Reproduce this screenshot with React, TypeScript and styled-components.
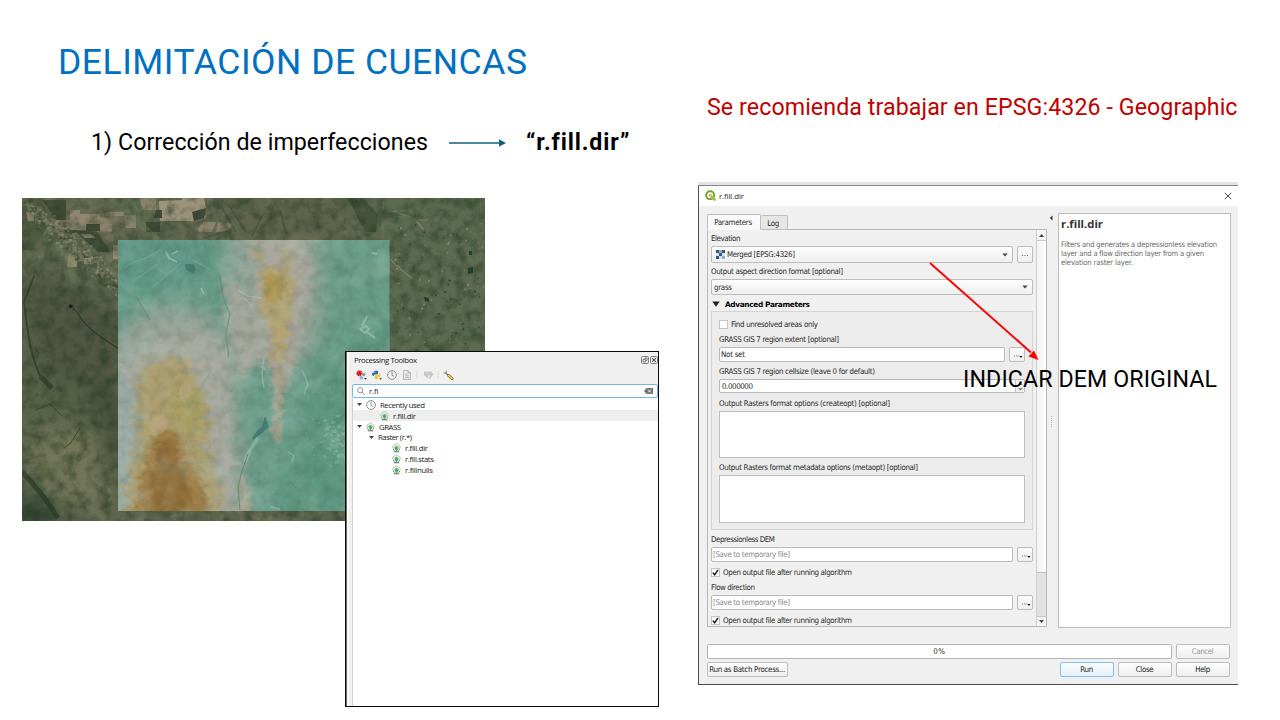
import React, { useLayoutEffect, useRef, useState } from "react";
import styled, { createGlobalStyle, css } from "styled-components";

const GlobalStyle = createGlobalStyle`
  * { box-sizing: border-box; }
  body { margin: 0; background: #fff; }
`;

const slideFont = `Roboto, "Liberation Sans", sans-serif`;
const formFont = `"DejaVu Sans Condensed", "DejaVu Sans", sans-serif`;
const treeFont = `"Open Sans", "Noto Sans", sans-serif`;

/* ---------- Text tracked to a fixed measure ---------- */

const Tracked = styled.span`
  display: inline-block;
  white-space: pre;
  flex: none;
`;

function Fit({ w, children }: { w: number; children: string }) {
  const ref = useRef<HTMLSpanElement>(null);
  const [spacing, setSpacing] = useState(0);
  useLayoutEffect(() => {
    const el = ref.current;
    if (!el) return;
    const natural = el.getBoundingClientRect().width - spacing * children.length;
    setSpacing((w - natural) / (children.length - 1));
  }, [w, children]);
  return (
    <Tracked ref={ref} style={{ letterSpacing: `${spacing}px` }}>
      {children}
    </Tracked>
  );
}

/* ---------- Slide ---------- */

const Slide = styled.main`
  width: 1280px;
  height: 720px;
  overflow: hidden;
  background: #fff;
  display: grid;
  grid-template-columns: 698px 1fr;
  font-family: ${slideFont};
  color: #000;
`;

const LeftColumn = styled.section`
  display: flex;
  flex-direction: column;
  padding: 39px 0 0 22px;
`;

const RightColumn = styled.section`
  position: relative;
  display: flex;
  flex-direction: column;
  padding-top: 92px;
`;

const Title = styled.h1`
  margin: 0;
  padding-left: 36px;
  height: 46px;
  line-height: 46px;
  font-size: 35.5px;
  font-weight: 400;
  color: #0070c0;
`;

const StepRow = styled.div`
  display: flex;
  align-items: center;
  height: 30px;
  margin: 42px 0 41px;
  padding-left: 69px;
  font-size: 23.2px;
`;

const StepArrow = styled.svg`
  flex: none;
  margin: 1px 20px 0 21px;
`;

const ToolName = styled.strong`
  font-weight: 700;
`;

const Notice = styled.p`
  margin: 0;
  padding-left: 9px;
  height: 30px;
  line-height: 30px;
  font-size: 23.2px;
  color: #c00000;
`;

const Stage = styled.div`
  position: relative;
  height: 522px;
`;

/* ---------- Map ---------- */

function rng(seed: number) {
  let s = seed;
  return () => {
    s = (s * 16807) % 2147483647;
    return s / 2147483647;
  };
}

const rand = rng(4217);
const scrubTones = ["#8f8a70", "#76805f", "#434f38", "#958e74", "#54654a"];
const scrub = Array.from({ length: 560 }, () => {
  const t = rand();
  const spread = (rand() + rand() - 1) * 34;
  return {
    x: 4 + t * 92 + spread * 0.6,
    y: 8 + t * 78 + spread,
    w: 0.8 + rand() * 2.6,
    h: 0.8 + rand() * 2,
    fill: scrubTones[Math.floor(rand() * scrubTones.length)],
  };
});
const ponds = Array.from({ length: 130 }, () => ({
  x: 370 + rand() * 92,
  y: 25 + rand() * 130,
  r: 0.35 + rand() * 0.8,
  light: rand() > 0.6,
}));
const towns = Array.from({ length: 90 }, () => ({
  x: 250 + rand() * 114,
  y: 130 + rand() * 180,
  r: 0.3 + rand() * 0.7,
}));
const cityBlocks = Array.from({ length: 110 }, () => ({
  x: 316 + (rand() + rand() - 1) * 22,
  y: 240 + (rand() + rand() - 1) * 26,
  w: 1 + rand() * 3.5,
}));

function SatelliteMap() {
  return (
    <svg width="463" height="323" viewBox="0 0 463 323" display="block">
      <defs>
        <filter id="grain" x="0" y="0" width="100%" height="100%" colorInterpolationFilters="sRGB">
          <feTurbulence type="fractalNoise" baseFrequency="0.09" numOctaves="6" seed="8" />
          <feColorMatrix values="0 0 0 0 0.14  0 0 0 0 0.22  0 0 0 0 0.13  2 0 0 0 -0.8" />
        </filter>
        <filter id="dust" x="0" y="0" width="100%" height="100%" colorInterpolationFilters="sRGB">
          <feTurbulence type="fractalNoise" baseFrequency="0.06" numOctaves="6" seed="23" />
          <feColorMatrix values="0 0 0 0 0.6  0 0 0 0 0.57  0 0 0 0 0.46  0 2.6 0 0 -1.15" />
        </filter>
        <filter id="haze" x="0" y="0" width="100%" height="100%" colorInterpolationFilters="sRGB">
          <feTurbulence type="fractalNoise" baseFrequency="0.035" numOctaves="6" seed="31" />
          <feColorMatrix values="0 0 0 0 0.72  0 0 0 0 0.82  0 0 0 0 0.78  0 2 0 0 -0.85" />
        </filter>
        <filter id="ridge" x="-30%" y="-30%" width="160%" height="160%" colorInterpolationFilters="sRGB">
          <feTurbulence type="fractalNoise" baseFrequency="0.07 0.13" numOctaves="5" seed="5" result="n" />
          <feGaussianBlur in="SourceGraphic" stdDeviation="4" result="b" />
          <feDisplacementMap in="b" in2="n" scale="22" xChannelSelector="R" yChannelSelector="G" />
        </filter>
        <filter id="ridgeFine" x="-30%" y="-30%" width="160%" height="160%" colorInterpolationFilters="sRGB">
          <feTurbulence type="fractalNoise" baseFrequency="0.11 0.17" numOctaves="4" seed="12" result="n" />
          <feGaussianBlur in="SourceGraphic" stdDeviation="1.9" result="b" />
          <feDisplacementMap in="b" in2="n" scale="13" xChannelSelector="R" yChannelSelector="G" />
        </filter>
        <filter id="soft" x="-30%" y="-30%" width="160%" height="160%" colorInterpolationFilters="sRGB">
          <feGaussianBlur stdDeviation="10" />
        </filter>
        <filter id="crisp" colorInterpolationFilters="sRGB"><feGaussianBlur stdDeviation="0.45" /></filter>
        <clipPath id="frame"><rect width="463" height="323" /></clipPath>
        <clipPath id="dem"><rect x="96" y="42" width="271.5" height="271" /></clipPath>
      </defs>
      <g clipPath="url(#frame)">
        <rect width="463" height="323" fill="#5c644c" />
        <rect width="463" height="323" filter="url(#dust)" opacity=".38" />
        <g filter="url(#soft)" opacity=".85">
          <rect x="360" y="-10" width="140" height="200" fill="#5c6c51" />
          <path d="M0 70 L50 85 L100 110 L100 250 L80 235 L60 190 L10 190 Z" fill="#4e5441" />
          <path d="M0 165 L60 190 L75 230 L30 225 L0 230 Z" fill="#556146" />
          <path d="M10 232 L75 232 L90 300 L50 310 L20 270 Z" fill="#777959" />
          <path d="M75 180 L100 190 V300 L85 270 Z" fill="#3e4834" />
          <path d="M0 285 L45 330 L-10 330 Z" fill="#263d2a" />
          <path d="M20 14 H100 V40 H60 Z" fill="#7a765e" />
          <path d="M215 0 H320 V42 H200 Z" fill="#5f644b" />
        </g>
        <g filter="url(#crisp)">
          <path d="M0 8 h38 v12 h-14 v12 l-14 20 l-10 0 Z" fill="#4d5a40" opacity=".8" />
          <path d="M20 2 h24 v30 h30 l14 22 h-12 l-22 -20 l-8 4 Z" fill="#374630" opacity=".75" />
          <g fill="#938a72">
            <path d="M33 22 h15 v-10 h10 v4 h20 v10 h12 v8 l-56 -3 Z" opacity=".85" />
            <path d="M137 3 l23 -1 v-2 h22 l2 10 l-8 4 l8 5 l-10 4 h-36 Z" fill="#9d937b" />
            <path d="M46 56 h9 v13 h-10 Z M59 36 h9 l6 4 h-12 Z M91 47 h5 v14 h-5 Z M62 60 h7 v6 h-7 Z" />
            <path d="M118 0 h16 v12 h-14 Z M176 30 l6 -6 h12 l-4 10 h-14 Z M196 24 l14 2 l-3 7 l-13 1 Z" opacity=".8" />
            <path d="M5 5 h6 v4 h-6 Z M4 14 h8 v9 h-6 Z M15 8 h5 v5 h-5 Z M84 14 h18 v4 h-18 Z M70 20 h18 v9 h-22 Z M102 17 h12 v13 h-10 Z" opacity=".8" />
          </g>
          <path d="M64 26 h14 v7 h-14 Z M124 24 h14 v10 h-14 Z M170 14 l14 -4 l-2 10 l-10 3 Z M134 12 h6 v8 h-8 Z" fill="#3e4935" />
          <path d="M90 0 L118 26 L136 42 M30 40 L46 60 L52 86 M108 0 L126 20" stroke="#67805c" strokeWidth="6" fill="none" opacity=".4" />
          {scrub.map((s, i) => (
            <rect key={i} x={s.x} y={s.y} width={s.w} height={s.h} fill={s.fill} opacity=".65" />
          ))}
          <path d="M326 0 h14 l16 16 l-2 18 h-10 l-8 -14 Z" fill="#37492f" opacity=".65" />
          <path d="M200 10 l14 24 M206 6 l18 28 M182 40 l26 -8 M258 12 l6 24 M240 18 l-10 20" stroke="#3b4a33" strokeWidth="1.8" fill="none" opacity=".5" />
          <path d="M361 0 V42" stroke="#8b8870" strokeWidth=".8" opacity=".5" />
          <path d="M12 78 L2 104 C6 136 8 156 18 178" stroke="#233425" strokeWidth="2" fill="none" opacity=".6" />
          <path d="M47 107 q5 -1 4 4 l4 3 C62 128 76 138 96 150" stroke="#1d2f26" strokeWidth="1.1" fill="none" opacity=".75" />
          <circle cx="48.500" cy="108.500" r="1.700" fill="#101f1b" />
          <path d="M18 178 L30 190 M0 274 C14 288 26 304 36 320" stroke="#1f3324" strokeWidth="5" fill="none" opacity=".6" />
          <path d="M42 250 L48 246 L58 230 M14 212 L28 206 L40 218" stroke="#343d2a" fill="none" opacity=".8" />
          {ponds.map((p, i) => (
            <circle key={i} cx={p.x} cy={p.y} r={p.r} fill={p.light ? "#a09e84" : "#1d3a2f"} opacity=".65" />
          ))}
          <path d="M446 70 l5 -1 v6 l-5 1 Z M402 99 l5 1 v4 l-4 -1 Z M447 53 l3 0 v4 l-3 0 Z" fill="#1f4038" />
          <path d="M369 62 L382 74 L392 82 M370 13 L392 20 L402 32 M368 13 h16 M390 22 h16" stroke="#928b72" strokeWidth="1.200" fill="none" opacity=".7" />
        </g>
        <rect width="463" height="323" filter="url(#grain)" opacity=".6" />

        <g clipPath="url(#dem)">
          <rect x="96" y="42" width="272" height="271" fill="#699d8a" />
          <g filter="url(#soft)">
            <path d="M80 150 L130 105 L190 115 L215 150 L222 330 L80 330 Z" fill="#98a59b" />
            <path d="M205 30 H300 V130 L290 160 L240 175 L230 110 L205 80 Z" fill="#93a498" />
            <path d="M290 160 L380 120 V340 H250 Z" fill="#5e9782" />
            <path d="M96 42 H195 V80 L96 110 Z" fill="#609886" />
          </g>
          <g filter="url(#ridge)">
            <path d="M224 30 H278 L290 70 L286 110 L278 150 L266 176 L250 168 L240 150 L236 110 L236 66 Z" fill="#aaa79b" />
            <path d="M202 78 L222 90 L240 100 L248 150 L236 168 L212 182 L206 140 Z" fill="#a3a69b" />
            <path d="M96 168 L130 140 L170 132 L204 150 L204 200 L212 260 L212 325 L90 325 Z" fill="#a6a89e" />
            <path d="M84 180 L112 180 L114 230 L104 325 L84 325 Z" fill="#9aaba6" />
            <path d="M120 170 L140 158 L162 160 L182 196 L190 232 L184 250 L196 285 L204 330 L104 330 L104 290 L116 240 L114 190 Z" fill="#ae9f70" />
          </g>
          <g filter="url(#ridgeFine)">
            <path d="M248 156 H270 L268 176 L262 200 L259 214 L258 244 L252 246 L252 215 L250 190 Z" fill="#aba391" />
            <path d="M218 274 L226 288 L230 318 L215 318 L217 290 Z" fill="#a9a493" />
            <path d="M240 70 L264 70 L274 84 L268 108 L268 124 L262 158 L250 162 L248 130 L238 112 L240 92 Z" fill="#b3a372" />
            <path d="M226 52 L238 50 L244 64 L238 68 Z M262 46 L270 50 L270 70 L260 64 Z" fill="#afa37e" />
            <path d="M244 78 L258 80 L264 94 L254 110 L240 98 Z" fill="#ae9650" opacity=".85" />
            <path d="M136 232 L150 230 L162 244 L164 262 L178 280 L190 325 L112 325 L112 300 L124 262 Z" fill="#a0804b" />
            <path d="M138 242 L154 242 L160 270 L170 300 L154 318 L128 318 L130 280 Z" fill="#906a35" opacity=".8" />
            <path d="M148 186 L178 190 L184 216 L168 240 L152 220 Z" fill="#a89e60" opacity=".7" />
          </g>
          <rect x="96" y="42" width="272" height="271" filter="url(#haze)" opacity=".3" />
          <rect x="96" y="42" width="272" height="271" filter="url(#grain)" opacity=".17" />
          <g filter="url(#crisp)" opacity=".75">
            <path d="M127 230 q3 -14 14 -14 q6 4 4 14 l-6 6 l-8 2 Z M158 188 q6 -6 12 0 l-2 10 l-8 4 l-4 -6 Z M160 160 q6 -4 10 0 l2 10 l-6 0 Z M178 164 q6 -2 6 3 q-6 6 -8 2 Z" fill="#bda988" opacity=".7" />
            <path d="M163 66 l8 0 l3 5 l-3 4 l-7 -3 Z" fill="#3d7469" />
            <path d="M243 218 l4 11 l-12 10 l-4 3 l-1 -2 l5 -7 l5 -4 Z" fill="#38706a" />
            <path d="M236 240 L228 252 L223 264" stroke="#9cc4b7" strokeWidth="3.500" fill="none" opacity=".7" />
            <path d="M226 256 L219 276 L216 290 L218 312" stroke="#5d7769" strokeWidth=".9" fill="none" />
            <path d="M115 100 L122 112 L128 122 M198 78 C200 92 200 100 208 116 L204 134 C203 146 208 150 206 160" stroke="#568674" strokeWidth="1.200" fill="none" opacity=".8" />
            <path d="M156 262 L172 266 L190 262 M178 190 L190 172" stroke="#8b9792" strokeWidth="1.200" fill="none" opacity=".7" />
            <path d="M144 54 l3 6 l8 4 M150 56 l6 -3 M179 90 l3 6 M338 131 l6 -3 l3 3 l-4 4 Z M344 133 l9 7 M340 128 l5 -10 M350 55 l5 1" stroke="#b3d4c8" strokeWidth="1.800" fill="none" opacity=".65" />
            <path d="M102 70 C115 60 125 62 138 52 M110 84 L136 66 M130 90 L160 64 M170 62 L190 72" stroke="#7fb5a2" strokeWidth="1.100" fill="none" opacity=".6" />
            <path d="M216 92 l10 6 l14 2 M222 100 l8 8 M242 160 l-2 16 l2 14 M238 168 l6 4 M280 172 l6 14 l-4 10 M266 254 l6 4 l-2 6 M248 309 l10 2" stroke="#b4cfc8" strokeWidth="1.500" fill="none" opacity=".55" />
            {cityBlocks.map((c, i) => (
              <rect key={i} x={c.x} y={c.y} width={c.w} height={c.w * 0.7} fill="#9cc7ba" opacity=".4" />
            ))}
            {towns.map((t, i) => (
              <circle key={i} cx={t.x} cy={t.y} r={t.r} fill="#a9cbbd" opacity=".4" />
            ))}
          </g>
        </g>
      </g>
    </svg>
  );
}

/* ---------- Processing toolbox ---------- */

const Toolbox = styled.aside`
  position: absolute;
  left: 323px;
  top: 153px;
  width: 314px;
  height: 356px;
  border: 1.5px solid #0a0a0a;
  background: #f0f0f0;
  padding: 1px 0 0 6px;
  display: flex;
  flex-direction: column;
  font-family: ${treeFont};
  font-size: 7.8px;
  color: #1d1d1d;
  box-shadow: inset 1px 0 #6b6b60, inset 3px 0 #fafafa;
`;

const ToolboxHeader = styled.header`
  display: flex;
  align-items: center;
  justify-content: space-between;
  height: 13px;
  padding: 0 0 0 2px;
`;

const IconBar = styled.div`
  display: flex;
  align-items: center;
  height: 18px;
  padding-left: 4px;
`;

const SearchBox = styled.div`
  display: flex;
  align-items: center;
  height: 14px;
  padding: 0 4px 0 4px;
  border: 1.5px solid #73b9ec;
  border-radius: 2px;
  background: #fff;
  gap: 4px;
  & > :last-child { margin-left: auto; }
`;

const Tree = styled.ul`
  list-style: none;
  margin: 0;
  padding: 1px 0 0;
  flex: 1;
  background: #fff;
  border-left: 1px solid #cfcfcf;
`;

const TreeRow = styled.li<{ $indent: number; $h?: number; $selected?: boolean }>`
  display: flex;
  align-items: center;
  height: ${(p) => p.$h ?? 11}px;
  padding-left: ${(p) => p.$indent}px;
  gap: 4px;
  background: ${(p) => (p.$selected ? "#eeeeee" : "transparent")};
`;

const Glyph = styled.svg`
  flex: none;
  display: block;
`;

const BarIcon = styled(Glyph)<{ $gap?: number }>`
  margin-right: ${(p) => p.$gap ?? 5}px;
`;

const Caret = () => (
  <Glyph width="5" height="5" viewBox="0 0 5 5"><path d="M0 1h5L2.5 4Z" fill="#404040" /></Glyph>
);

const ClockIcon = ({ size = 10 }: { size?: number }) => (
  <Glyph width={size} height={size} viewBox="0 0 10 10" fill="none" stroke="#858585" strokeWidth=".9">
    <circle cx="5" cy="5" r="4.4" /><path d="M5 1.6V5.2L7 6.5" />
  </Glyph>
);

const GrassIcon = () => (
  <Glyph width="9" height="10" viewBox="0 0 9 10">
    <path d="M4.500.4 8.400 3.600 6.800 8H2.200L.6 3.600Z" fill="#eef3ee" stroke="#a3aaa4" strokeWidth=".7" />
    <circle cx="4.500" cy="4.800" r="2" fill="#5bb56c" opacity=".75" />
    <path d="M4.500 7.800V3.500M4.300 7.400 2.800 4.400M4.700 7.400 6.200 4.400" stroke="#35a24c" strokeWidth=".8" fill="none" />
    <path d="M2.200 7.200 1 6M6.800 7.200 8 6" stroke="#7b8a7e" strokeWidth=".8" />
    <path d="M1.800 8.200H7.200V9.300H1.800Z" fill="#6b776f" />
  </Glyph>
);

function ProcessingToolbox() {
  return (
    <Toolbox>
      <ToolboxHeader>
        <Fit w={63}>Processing Toolbox</Fit>
        <Glyph width="17" height="8" viewBox="0 0 17 8" fill="none" stroke="#666" strokeWidth=".8">
          <rect x=".5" y=".5" width="7" height="7" rx="1.2" /><path d="M2 6V3.5h2.500V6ZM3.800 3.300V2h2.300v2.400H4.800" />
          <rect x="9.500" y=".5" width="7" height="7" rx="1.200" /><path d="m11.200 2.200 3.600 3.600m0-3.600-3.600 3.600" strokeWidth="1.300" />
        </Glyph>
      </ToolboxHeader>
      <IconBar>
        <BarIcon $gap={5} width="11" height="10" viewBox="0 0 11 10">
          <circle cx="3.300" cy="3.300" r="2.300" fill="#d51f1f" stroke="#d51f1f" strokeWidth="1.600" strokeDasharray="1.100 .7" />
          <circle cx="7.700" cy="4.400" r="1.500" fill="#999" stroke="#999" strokeDasharray=".8 .5" />
          <circle cx="5.400" cy="7.800" r="1.500" fill="#8fb2e4" stroke="#8fb2e4" strokeDasharray=".8 .5" />
          <path d="M8 8h3L9.500 9.700Z" fill="#333" />
        </BarIcon>
        <BarIcon width="10" height="10" viewBox="0 0 10 10">
          <path d="M2.200 1.200Q4-.3 6 1v2.500Q6 4.600 4.800 4.600H3Q2 4.600 1.800 6 .2 6-.1 4.200 0 2.600 1.500 2.600H3.800V2.200H2.200Z" fill="#2f6ea5" />
          <path d="M6.200 8.800Q4.400 9.900 2.600 8.600V6.300Q2.800 5.200 3.800 5.200h2Q7 5 7 3.200q1.600.2 1.600 2-.1 1.700-1.600 1.900H5v.5h1.200Z" fill="#f2c62f" />
          <path d="M7.200 8.200h2.800L8.600 9.800Z" fill="#333" />
        </BarIcon>
        <ClockIcon />
        <BarIcon width="21" height="10" viewBox="0 0 21 10" fill="none" stroke="#a5a5a5" strokeWidth=".8">
          <path d="M6.500.6h4.700l2.200 2.200v6.600H6.500ZM11 .6v2.500h2.400M8 4h2.600M8 5.800h4M8 7.500h4" />
          <path d="M20 1v8" stroke="#d2d2d2" />
        </BarIcon>
        <BarIcon $gap={4} width="16" height="10" viewBox="0 0 16 10">
          <path d="M1 1.600h8v4H5.400v3L1 5.600Z" fill="#c9c9c9" />
          <path d="m5.600 8.200 4-5 1 .8-3.900 5Z" fill="#c4bfae" />
          <path d="M15 1v8" stroke="#d2d2d2" strokeWidth=".8" />
        </BarIcon>
        <Glyph width="11" height="10" viewBox="0 0 11 10" fill="none">
          <path d="m2.600 3 3 2.600" stroke="#777" strokeWidth="1.200" />
          <path d="M3.400.7 2.900 3 .7 3" stroke="#777" />
          <path d="m5.500 5.400 3.700 3.300" stroke="#8a7420" strokeWidth="2.800" strokeLinecap="round" />
          <path d="m5.700 5.400 3.400 3.100" stroke="#f3d568" strokeWidth="1.400" strokeLinecap="round" />
        </Glyph>
      </IconBar>
      <SearchBox>
        <Glyph width="8" height="8" viewBox="0 0 8 8" fill="none" stroke="#777" strokeWidth=".8">
          <circle cx="3.200" cy="3.200" r="2.600" /><path d="m5.100 5.100 2.500 2.500" />
        </Glyph>
        <Fit w={9.5}>r.fi</Fit>
        <Glyph width="9" height="6" viewBox="0 0 9 6">
          <path d="M2.600 0H9v6H2.600L0 3Z" fill="#707070" /><path d="m4 1.500 3 3m0-3-3 3" stroke="#fff" strokeWidth=".9" />
        </Glyph>
      </SearchBox>
      <Tree>
        <TreeRow $indent={4}><Caret /><ClockIcon /><Fit w={45}>Recently used</Fit></TreeRow>
        <TreeRow $indent={27} $selected><GrassIcon /><Fit w={23}>r.fill.dir</Fit></TreeRow>
        <TreeRow $indent={4}><Caret /><GrassIcon /><Fit w={22}>GRASS</Fit></TreeRow>
        <TreeRow $indent={16} $h={10}><Caret /><Fit w={34}>Raster (r.*)</Fit></TreeRow>
        <TreeRow $indent={39}><GrassIcon /><Fit w={23}>r.fill.dir</Fit></TreeRow>
        <TreeRow $indent={39}><GrassIcon /><Fit w={29}>r.fill.stats</Fit></TreeRow>
        <TreeRow $indent={39}><GrassIcon /><Fit w={28}>r.fillnulls</Fit></TreeRow>
      </Tree>
    </Toolbox>
  );
}

/* ---------- r.fill.dir dialog ---------- */

const Dialog = styled.section`
  width: 540px;
  height: 503px;
  margin-top: 60px;
  border-top: 3px solid #e4e4e4;
  background: #f0f0f0;
  display: flex;
  flex-direction: column;
  font-family: ${formFont};
  font-size: 7.9px;
  color: #2a2a2a;
  box-shadow: inset 0 1px #858585, inset 1px 0 #4d4d4d, inset 0 -1px #4d4d4d;
`;

const TitleBar = styled.header`
  display: flex;
  align-items: center;
  height: 20px;
  margin: 1px 0 0 1px;
  padding: 0 6px 1px 6px;
  background: #fff;
  gap: 3px;
  font-family: ${treeFont};
  & > :last-child { margin-left: auto; }
`;

const DialogBody = styled.div`
  display: grid;
  grid-template-columns: 340px 11px 173px;
  padding: 7px 0 0 9px;
  height: 421px;
`;

const TabsColumn = styled.div`
  display: flex;
  flex-direction: column;
  height: 414px;
`;

const TabStrip = styled.div`
  display: flex;
  align-items: flex-end;
  height: 17px;
  flex: none;
  margin-bottom: -1px;
`;

const Tab = styled.div<{ $active?: boolean }>`
  position: relative;
  display: flex;
  justify-content: center;
  align-items: center;
  width: ${(p) => (p.$active ? 54 : 27)}px;
  height: ${(p) => (p.$active ? 16 : 15)}px;
  padding: 1px 2px 0 0;
  border: 1px solid #bdbdbd;
  border-left-width: ${(p) => (p.$active ? 1 : 0)}px;
  border-bottom-color: ${(p) => (p.$active ? "#fafafa" : "#bdbdbd")};
  border-radius: 2px 2px 0 0;
  background: ${(p) => (p.$active ? "#fafafa" : "#e6e6e6")};
`;

const TabPanel = styled.div`
  flex: 1;
  display: flex;
  min-height: 0;
  border: 1px solid #b8b8b8;
`;

const Form = styled.div`
  flex: 1;
  padding: 0 3px;
  display: flex;
  flex-direction: column;
`;

const Label = styled.div<{ $h: number; $drop?: number }>`
  display: flex;
  align-items: center;
  flex: none;
  height: ${(p) => p.$h}px;
  padding-top: ${(p) => p.$drop ?? 0}px;
`;

const FieldRow = styled.div<{ $h: number; $gap?: number }>`
  display: flex;
  flex: none;
  height: ${(p) => p.$h}px;
  gap: ${(p) => p.$gap ?? 4}px;
`;

const raised = css`
  border: 1px solid #bcbcbc;
  border-radius: 2px;
  background: linear-gradient(#fdfdfd, #efefef);
`;

const Combo = styled.div<{ $pad?: number }>`
  ${raised}
  flex: 1;
  display: flex;
  align-items: center;
  gap: 2px;
  padding: 0 4px 0 ${(p) => p.$pad ?? 2}px;
  & > :last-child { margin-left: auto; }
`;

const Input = styled.div<{ $muted?: boolean }>`
  flex: 1;
  display: flex;
  align-items: center;
  padding-left: 1px;
  border: 1px solid #b9b9b9;
  border-radius: 2px;
  background: #fff;
  color: ${(p) => (p.$muted ? "#8c8c8c" : "#222")};
`;

const SpinBox = styled(Input)`
  justify-content: space-between;
  padding-left: 2px;
`;

const SpinButtons = styled.div`
  display: flex;
  align-items: center;
  justify-content: center;
  width: 9px;
  height: 100%;
  border-left: 1px solid #c8c8c8;
  background: #f0f0f0;
`;

const MoreButton = styled.button`
  ${raised}
  flex: none;
  display: flex;
  align-items: center;
  justify-content: center;
  width: 16px;
  padding: 0;
`;

const TextArea = styled.div<{ $h: number }>`
  flex: none;
  height: ${(p) => p.$h}px;
  border: 1px solid #bdbdbd;
  background: #fff;
`;

const SectionHead = styled.div`
  display: flex;
  align-items: center;
  flex: none;
  height: 16px;
  gap: 5px;
  padding: 2px 0 0 1px;
  font-family: "DejaVu Sans", sans-serif;
  font-weight: 700;
  font-size: 7.4px;
  color: #000;
`;

const Group = styled.div`
  flex: none;
  height: 219px;
  border: 1px solid #d4d4d4;
  background: #ececec;
  padding: 4px 7px 0;
`;

const CheckRow = styled.div<{ $h: number; $drop?: number }>`
  display: flex;
  align-items: center;
  flex: none;
  height: ${(p) => p.$h}px;
  padding-top: ${(p) => p.$drop ?? 0}px;
  gap: 3px;
`;

const CheckBox = styled.span`
  flex: none;
  width: 9px;
  height: 9px;
  border: 1px solid #c4c4c4;
  background: #fff;
  display: flex;
  align-items: center;
  justify-content: center;
`;

const ScrollBar = styled.div`
  display: flex;
  flex-direction: column;
  width: 10px;
  border-left: 1px solid #cfcfcf;
  background: #e2e2e2;
`;

const ScrollStep = styled.div<{ $bottom?: boolean }>`
  display: flex;
  align-items: center;
  justify-content: center;
  height: 10px;
  flex: none;
  background: #f6f6f6;
  ${(p) => p.$bottom && css`margin-top: auto; border-top: 1px solid #c9c9c9;`}
`;

const ScrollThumb = styled.div`
  height: 333px;
  border-top: 1px solid #c9c9c9;
  border-bottom: 1px solid #c0c0c0;
  background: linear-gradient(90deg, #f3f3f3, #fdfdfd);
`;

const Splitter = styled.div`
  display: flex;
  flex-direction: column;
  align-items: center;
  justify-content: space-between;
  height: 414px;
  padding: 2px 3px 199px 0;
`;

const HelpPane = styled.article`
  border: 1px solid #bdbdbd;
  background: #fff;
  padding: 3px 0 0 2px;
  height: 415px;
`;

const HelpTitle = styled.h2`
  margin: 0 0 9px;
  height: 14px;
  line-height: 14px;
  font-family: ${treeFont};
  font-size: 11.3px;
  font-weight: 700;
  color: #333;
`;

const HelpLine = styled.div`
  height: 9px;
  line-height: 9px;
  font-size: 7.6px;
  color: #6a6a6a;
`;

const ProgressRow = styled.div`
  display: flex;
  gap: 4px;
  height: 15px;
  margin: 17px 8px 3px 9px;
`;

const Progress = styled.div`
  flex: 1;
  display: flex;
  align-items: center;
  justify-content: center;
  border: 1px solid #b5b5b5;
  border-radius: 2px;
  background: #fff;
`;

const ButtonRow = styled.footer`
  display: flex;
  gap: 4px;
  height: 15px;
  margin: 0 8px 0 9px;
`;

const PushButton = styled.button<{ $w: number; $primary?: boolean; $disabled?: boolean; $first?: boolean }>`
  ${raised}
  width: ${(p) => p.$w}px;
  padding: 0 1px 0 0;
  display: flex;
  align-items: center;
  justify-content: center;
  font: inherit;
  color: ${(p) => (p.$disabled ? "#999" : "#222")};
  ${(p) => p.$primary && css`border-color: #7fc0f3; background: linear-gradient(#fbfdff, #e6f0f8);`}
  ${(p) => p.$first && css`margin-right: auto;`}
`;

const DownArrow = () => (
  <Glyph width="6" height="4" viewBox="0 0 6 4"><path d="M.3.5h5.400L3 3.500Z" fill="#444" /></Glyph>
);

const Dots = ({ menu }: { menu?: boolean }) => (
  <Glyph width="12" height="9" viewBox="0 0 12 9" fill="#666">
    <path d={menu ? "M3 5.5h1v1H3zM5.2 5.5h1v1h-1zM7.4 5.5h1v1h-1z" : "M3 5h1v1H3zM5.5 5h1v1h-1zM8 5h1v1H8z"} />
    {menu && <path d="M8.400 6h3.200L10 8Z" fill="#222" />}
  </Glyph>
);

const Tick = () => (
  <Glyph width="7" height="7" viewBox="0 0 7 7" fill="none"><path d="M.9 3.600 2.600 5.800 6 .8" stroke="#111" strokeWidth="1.400" /></Glyph>
);

const QgisIcon = () => (
  <Glyph width="11" height="11" viewBox="0 0 11 11" fill="none">
    <circle cx="5.200" cy="5.200" r="4" stroke="#71a52c" strokeWidth="2" />
    <path d="M5.500 5.500 7.200 5.500 10.800 9 10.800 10.800 8.800 10.800 5.500 7.300Z" fill="#8fbc3c" stroke="#fff" strokeWidth=".3" />
    <path d="M3.900 3.900H6.500V5.400H5.400V6.500H3.900Z" fill="#ee9b3d" />
  </Glyph>
);

const RasterIcon = () => (
  <Glyph width="9" height="9" viewBox="0 0 9 9">
    <rect width="9" height="9" fill="#d3e3ee" />
    <path d="M0 0h3v3H0zM3 3h3v3H3zM6 0h3v3H6zM0 6h3v3H0z" fill="#35587c" />
    <path d="M3 0h3v3H3zM6 6h3v3H6z" fill="#8fb0cb" />
  </Glyph>
);

function OutputField({ checkHeight, drop }: { checkHeight: number; drop: number }) {
  return (
    <>
      <FieldRow $h={15}>
        <Input $muted><Fit w={77}>[Save to temporary file]</Fit></Input>
        <MoreButton><Dots menu /></MoreButton>
      </FieldRow>
      <CheckRow $h={checkHeight} $drop={drop}>
        <CheckBox><Tick /></CheckBox>
        <Fit w={129}>Open output file after running algorithm</Fit>
      </CheckRow>
    </>
  );
}

function FillDirDialog() {
  return (
    <Dialog>
      <TitleBar>
        <QgisIcon />
        <Fit w={25}>r.fill.dir</Fit>
        <Glyph width="8" height="8" viewBox="0 0 8 8"><path d="m.8.8 6.400 6.400m0-6.400L.8 7.200" stroke="#333" strokeWidth=".9" /></Glyph>
      </TitleBar>
      <DialogBody>
        <TabsColumn>
          <TabStrip>
            <Tab $active><Fit w={38}>Parameters</Fit></Tab>
            <Tab><Fit w={12}>Log</Fit></Tab>
          </TabStrip>
          <TabPanel>
            <Form>
              <Label $h={16}><Fit w={29.5}>Elevation</Fit></Label>
              <FieldRow $h={17}>
                <Combo $pad={4}><RasterIcon /><Fit w={68}>Merged [EPSG:4326]</Fit><DownArrow /></Combo>
                <MoreButton><Dots /></MoreButton>
              </FieldRow>
              <Label $h={16}><Fit w={132}>Output aspect direction format [optional]</Fit></Label>
              <FieldRow $h={16}><Combo><Fit w={18}>grass</Fit><DownArrow /></Combo></FieldRow>
              <SectionHead>
                <Glyph width="8" height="6" viewBox="0 0 8 6"><path d="M.3.5h7.400L4 5.700Z" fill="#222" /></Glyph>
                <Fit w={85}>Advanced Parameters</Fit>
              </SectionHead>
              <Group>
                <CheckRow $h={16}><CheckBox /><Fit w={87}>Find unresolved areas only</Fit></CheckRow>
                <Label $h={15}><Fit w={120}>GRASS GIS 7 region extent [optional]</Fit></Label>
                <FieldRow $h={15}>
                  <Input><Fit w={24}>Not set</Fit></Input>
                  <MoreButton><Dots menu /></MoreButton>
                </FieldRow>
                <Label $h={17} $drop={1}><Fit w={156}>GRASS GIS 7 region cellsize (leave 0 for default)</Fit></Label>
                <FieldRow $h={14}>
                  <SpinBox>
                    <Fit w={31}>0.000000</Fit>
                    <SpinButtons><Glyph width="5" height="9" viewBox="0 0 5 9" fill="#888"><path d="M0 3 2.500.5 5 3ZM0 6 2.500 8.500 5 6Z" /></Glyph></SpinButtons>
                  </SpinBox>
                </FieldRow>
                <Label $h={18} $drop={2}><Fit w={171}>Output Rasters format options (createopt) [optional]</Fit></Label>
                <TextArea $h={47} />
                <Label $h={17} $drop={1}><Fit w={199}>Output Rasters format metadata options (metaopt) [optional]</Fit></Label>
                <TextArea $h={48} />
              </Group>
              <Label $h={17} $drop={2}><Fit w={64}>Depressionless DEM</Fit></Label>
              <OutputField checkHeight={18} drop={3} />
              <Label $h={15}><Fit w={44}>Flow direction</Fit></Label>
              <OutputField checkHeight={15} drop={6} />
            </Form>
            <ScrollBar>
              <ScrollStep><Glyph width="5" height="3" viewBox="0 0 5 3"><path d="M0 3h5L2.500 0Z" fill="#444" /></Glyph></ScrollStep>
              <ScrollThumb />
              <ScrollStep $bottom><Glyph width="5" height="3" viewBox="0 0 5 3"><path d="M0 0h5L2.500 3Z" fill="#444" /></Glyph></ScrollStep>
            </ScrollBar>
          </TabPanel>
        </TabsColumn>
        <Splitter>
          <Glyph width="4" height="6" viewBox="0 0 4 6"><path d="M3.500.5v5L.8 3Z" fill="#333" /></Glyph>
          <Glyph width="1" height="12" viewBox="0 0 1 12"><path d="M.5 0v12" stroke="#bbb" strokeDasharray="1 1" /></Glyph>
        </Splitter>
        <HelpPane>
          <HelpTitle><Fit w={42}>r.fill.dir</Fit></HelpTitle>
          <HelpLine><Fit w={156}>Filters and generates a depressionless elevation</Fit></HelpLine>
          <HelpLine><Fit w={143}>layer and a flow direction layer from a given</Fit></HelpLine>
          <HelpLine><Fit w={72}>elevation raster layer.</Fit></HelpLine>
        </HelpPane>
      </DialogBody>
      <ProgressRow>
        <Progress><Fit w={12}>0%</Fit></Progress>
        <PushButton $w={54} $disabled><Fit w={22}>Cancel</Fit></PushButton>
      </ProgressRow>
      <ButtonRow>
        <PushButton $w={81} $first><Fit w={76}>Run as Batch Process...</Fit></PushButton>
        <PushButton $w={54} $primary><Fit w={13}>Run</Fit></PushButton>
        <PushButton $w={54}><Fit w={18}>Close</Fit></PushButton>
        <PushButton $w={54}><Fit w={15}>Help</Fit></PushButton>
      </ButtonRow>
    </Dialog>
  );
}

/* ---------- Annotation over the dialog ---------- */

const Callout = styled.div`
  position: absolute;
  left: 265px;
  top: 364px;
  height: 30px;
  line-height: 30px;
  font-size: 23.2px;
`;

const CalloutArrow = styled.svg`
  position: absolute;
  left: 225px;
  top: 255px;
`;

export default function App() {
  return (
    <Slide>
      <GlobalStyle />
      <LeftColumn>
        <Title><Fit w={469}>DELIMITACIÓN DE CUENCAS</Fit></Title>
        <StepRow>
          <Fit w={337}>1) Corrección de imperfecciones</Fit>
          <StepArrow width="57" height="8" viewBox="0 0 57 8">
            <path d="M0 4h51" stroke="#156082" strokeWidth="1.600" /><path d="M50 .2 57 4 50 7.800Z" fill="#156082" />
          </StepArrow>
          <ToolName><Fit w={103}>“r.fill.dir”</Fit></ToolName>
        </StepRow>
        <Stage>
          <SatelliteMap />
          <ProcessingToolbox />
        </Stage>
      </LeftColumn>
      <RightColumn>
        <Notice><Fit w={530.5}>Se recomienda trabajar en EPSG:4326 - Geographic</Fit></Notice>
        <FillDirDialog />
        <CalloutArrow width="125" height="115" viewBox="0 0 125 115">
          <path d="M7 8 108 97.500" stroke="#ff0000" strokeWidth="2" /><path d="M115.500 105 105.500 101.500 111 95.500Z" fill="#ff0000" />
        </CalloutArrow>
        <Callout><Fit w={254}>INDICAR DEM ORIGINAL</Fit></Callout>
      </RightColumn>
    </Slide>
  );
}
